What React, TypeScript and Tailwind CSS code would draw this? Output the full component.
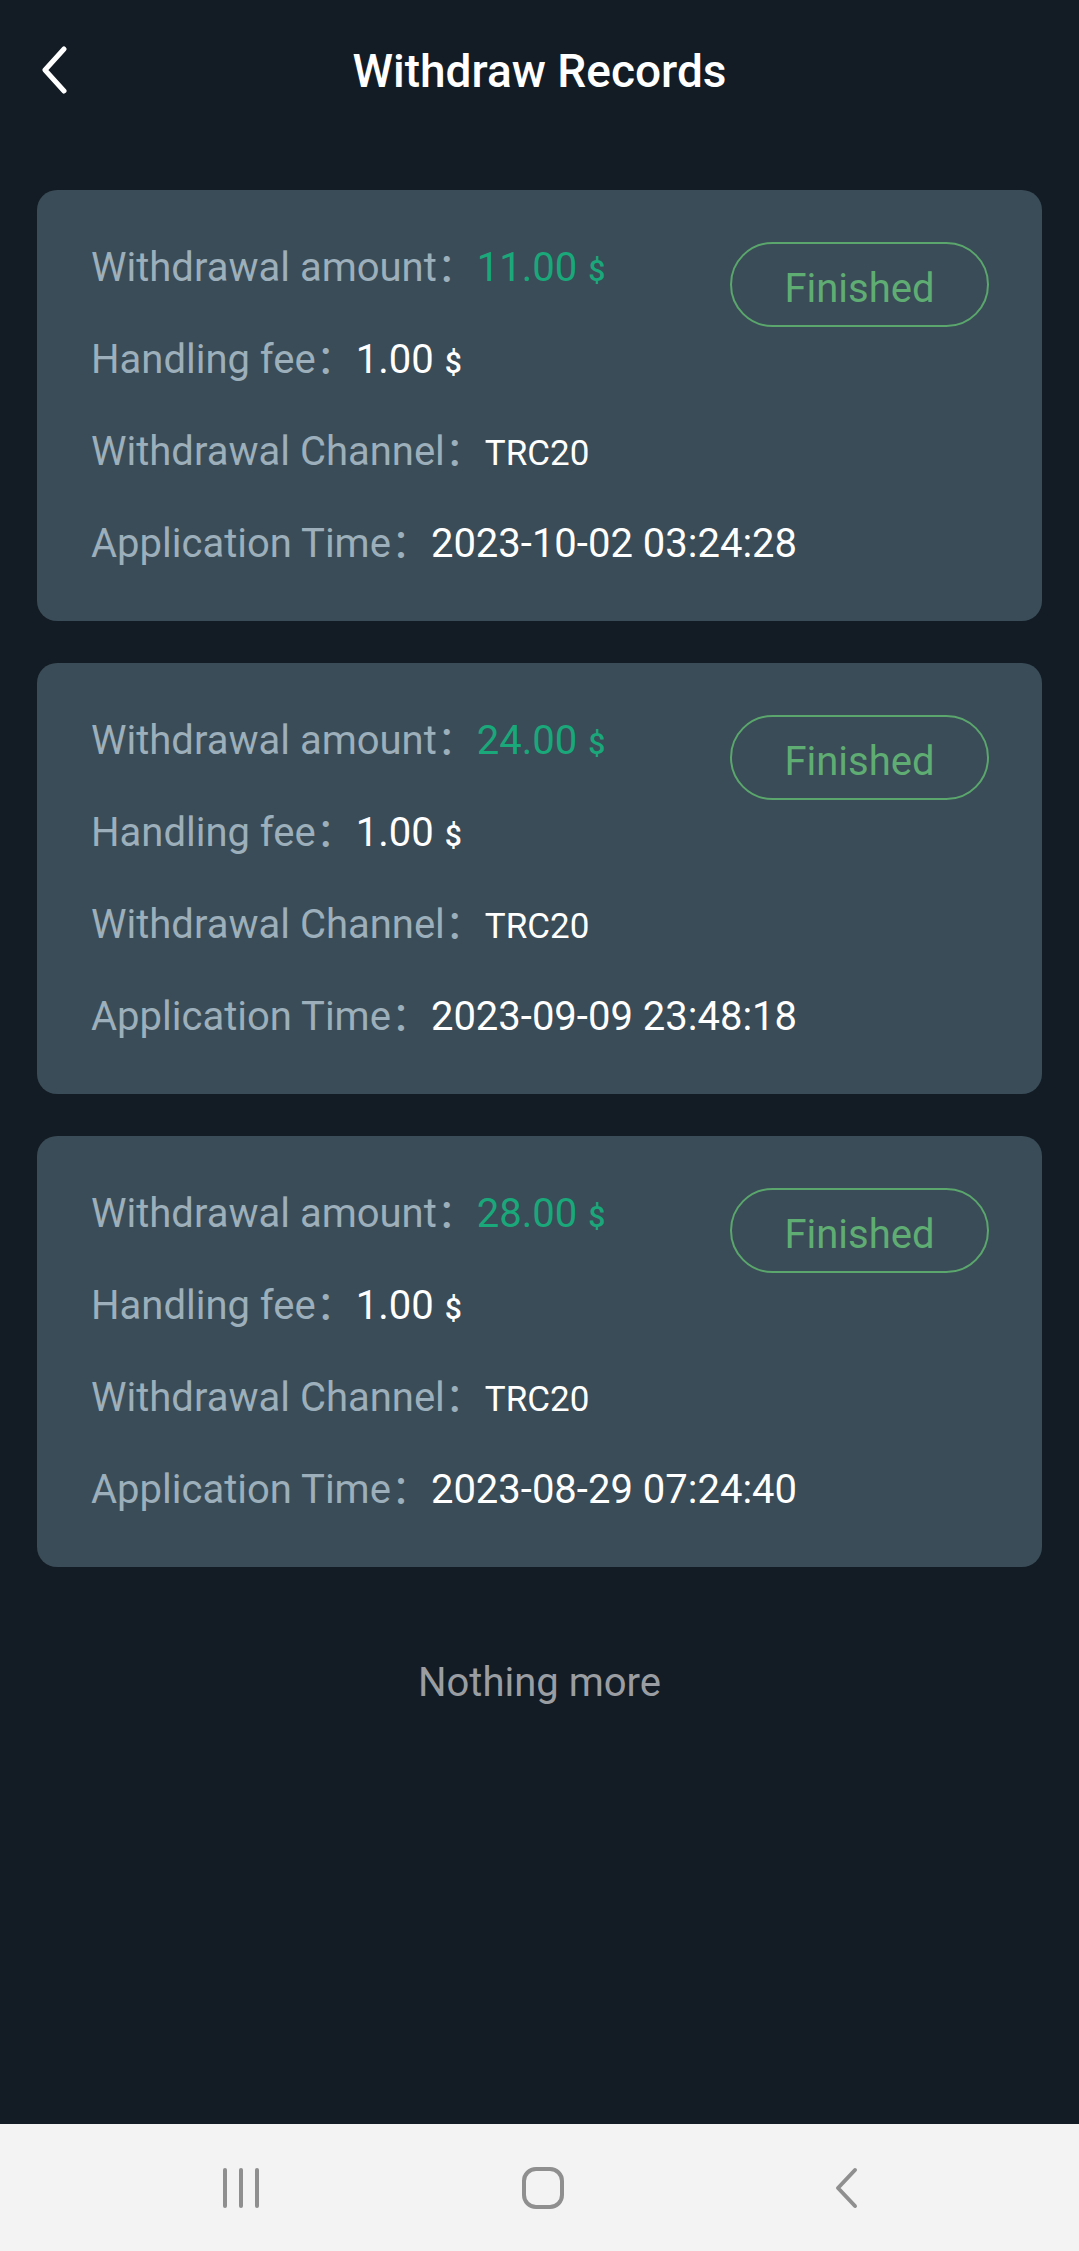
import React from "react";

type Rec = { amount: string; time: string };

const records: Rec[] = [
  { amount: "11.00", time: "2023-10-02 03:24:28" },
  { amount: "24.00", time: "2023-09-09 23:48:18" },
  { amount: "28.00", time: "2023-08-29 07:24:40" },
];

const FONT = { fontFamily: 'Roboto, "Noto Sans CJK SC", sans-serif' };

function Card({ r }: { r: Rec }) {
  return (
    <div className="flex justify-between items-start rounded-[20px] bg-[#3a4c57] pl-[54px] pr-[53px] pt-[32px] pb-[31px]">
      <div className="flex flex-col min-w-0">
        <div className="h-[92px] leading-[92px] text-[40px] text-[#9cafba] whitespace-nowrap">
          Withdrawal amount：
          <span className="text-[#1aa77a]">{r.amount}</span>
          <span className="text-[#1aa77a] text-[30px] font-medium leading-none ml-[11px]">$</span>
        </div>
        <div className="h-[92px] leading-[92px] text-[40px] text-[#9cafba] whitespace-nowrap">
          Handling fee：
          <span className="text-white">1.00</span>
          <span className="text-white text-[30px] font-medium leading-none ml-[11px]">$</span>
        </div>
        <div className="h-[92px] leading-[92px] text-[40px] text-[#9cafba] whitespace-nowrap">
          Withdrawal Channel：
          <span className="text-white text-[35px] leading-none">TRC20</span>
        </div>
        <div className="h-[92px] leading-[92px] text-[40px] text-[#9cafba] whitespace-nowrap">
          Application Time：
          <span className="text-white">{r.time}</span>
        </div>
      </div>
      <div className="shrink-0 mt-[20px] w-[259px] h-[85px] pt-[9px] rounded-full border-2 border-[#5aa66c] flex items-center justify-center text-[40px] leading-none text-[#5fad73]">
        Finished
      </div>
    </div>
  );
}

export default function App() {
  return (
    <div className="min-h-screen flex flex-col bg-[#131c25]" style={FONT}>
      <div className="flex-1 flex flex-col">
        <div className="h-[140px] grid grid-cols-[1fr_auto_1fr] items-center px-[38px]">
          <svg width="32" height="48" viewBox="0 0 32 48" className="block">
            <polyline
              points="26,3 7,24 26,45"
              fill="none"
              stroke="#ffffff"
              strokeWidth="5"
              strokeLinecap="round"
              strokeLinejoin="round"
            />
          </svg>
          <div className="text-white text-[46px] font-medium leading-[56px] whitespace-nowrap pt-[2px]">
            Withdraw Records
          </div>
          <div />
        </div>
        <div className="px-[37px] pt-[50px] flex flex-col gap-[42px]">
          {records.map((r, i) => (
            <Card key={i} r={r} />
          ))}
        </div>
        <div className="mt-[88px] text-center text-[40px] leading-[56px] text-[#9a9ea3]">
          Nothing more
        </div>
      </div>
      <div className="h-[127px] bg-[#f3f3f3] flex items-center justify-center pl-[6px]">
        <div className="w-[302px] flex justify-center">
          <svg width="40" height="44" viewBox="0 0 40 44">
            <g stroke="#8f8f8f" strokeWidth="4" strokeLinecap="round">
              <line x1="4" y1="4" x2="4" y2="40" />
              <line x1="20" y1="4" x2="20" y2="40" />
              <line x1="36" y1="4" x2="36" y2="40" />
            </g>
          </svg>
        </div>
        <div className="w-[302px] flex justify-center">
          <svg width="44" height="44" viewBox="0 0 44 44">
            <rect x="3" y="3" width="38" height="38" rx="12" fill="none" stroke="#8f8f8f" strokeWidth="4" />
          </svg>
        </div>
        <div className="w-[302px] flex justify-center">
          <svg width="30" height="44" viewBox="0 0 30 44">
            <polyline
              points="25,4 8,22 25,40"
              fill="none"
              stroke="#8f8f8f"
              strokeWidth="4"
              strokeLinecap="round"
              strokeLinejoin="round"
            />
          </svg>
        </div>
      </div>
    </div>
  );
}
